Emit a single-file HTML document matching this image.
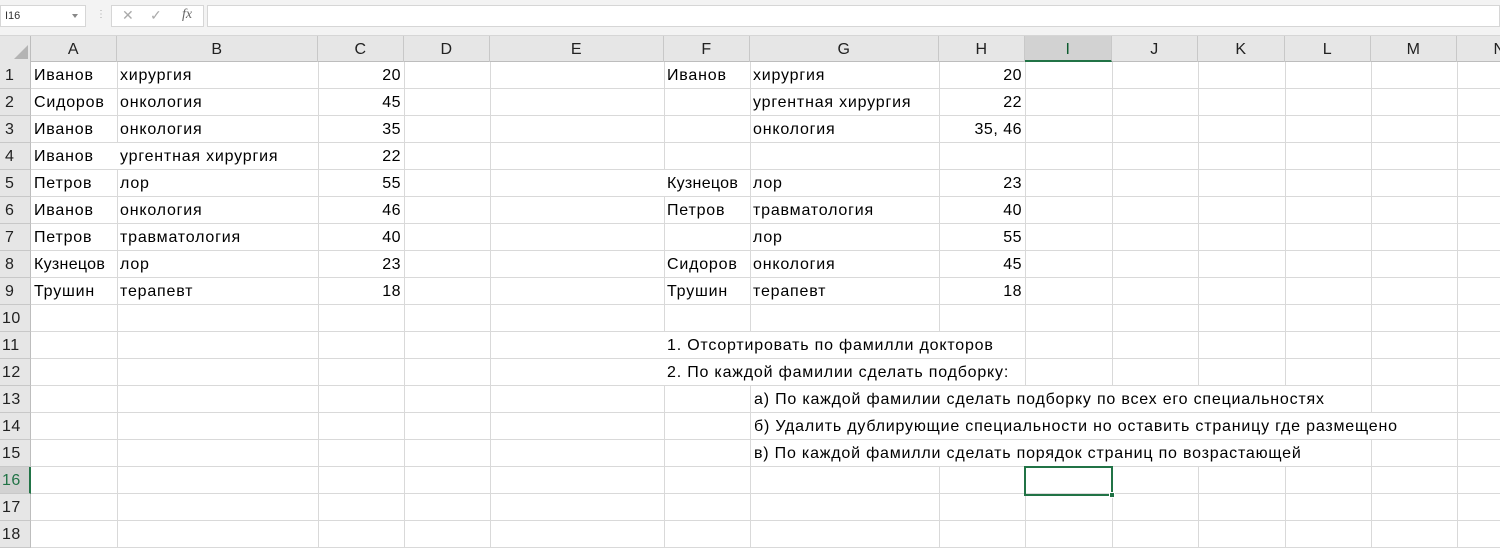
<!DOCTYPE html>
<html><head><meta charset="utf-8"><style>
*{margin:0;padding:0;box-sizing:border-box}
body{width:1500px;height:554px;overflow:hidden;background:#fff;position:relative;font-family:"Liberation Sans",Arial,sans-serif;color:#000}
.top{position:absolute;left:0;top:0;width:1500px;height:36px;background:#f3f3f3;border-bottom:1px solid #d6d6d6}
.nb{position:absolute;left:0;top:5px;width:86px;height:22px;background:#fff;border:1px solid #d6d6d6;font-size:11px;line-height:20px;padding-left:4px;color:#333}
.nb:after{content:"";position:absolute;right:7px;top:8px;border:3px solid transparent;border-top:4px solid #888}
.dots{position:absolute;left:96px;top:9px;color:#aaa;font-size:10px}
.fx{position:absolute;left:111px;top:5px;width:93px;height:22px;background:#fff;border:1px solid #d6d6d6;color:#aaa;font-size:14px}
.fb{position:absolute;left:207px;top:5px;width:1293px;height:22px;background:#fff;border:1px solid #d6d6d6}
.hdr{position:absolute;left:0;top:36px;width:1500px;height:26px;background:#e6e6e6;border-bottom:1px solid #bdbdbd}
.ch{position:absolute;top:36px;height:26px;line-height:27px;text-align:center;font-size:16px;color:#222;border-right:1px solid #c8c8c8;letter-spacing:0.5px}
.rh{position:absolute;left:0;width:31px;background:#e6e6e6;border-right:1px solid #bdbdbd;border-bottom:1px solid #c8c8c8;height:27px;line-height:28px;font-size:16px;color:#222;padding-left:5px;letter-spacing:0.5px}
.vl{position:absolute;top:62px;width:1px;height:486px;background:#d9d9d9}
.grid{position:absolute;left:31px;top:62px;width:1469px;height:486px;background:repeating-linear-gradient(to bottom,transparent 0 26px,#d9d9d9 26px 27px)}
.c{position:absolute;height:26px;line-height:28px;font-size:16px;white-space:nowrap;padding:0 3px;background:#fff;letter-spacing:0.8px}
.r{text-align:right;letter-spacing:0.5px}
.t{background:transparent}
</style></head><body>
<div class="top"></div>
<div class="nb">I16</div>
<div class="dots">⋮</div>
<div class="fx"><span style="position:absolute;left:10px;top:1px">✕</span><span style="position:absolute;left:38px;top:1px">✓</span><span style="position:absolute;left:70px;top:1px;font-style:italic;font-family:'Liberation Serif',serif;color:#666">fx</span></div>
<div class="fb"></div>
<div class="hdr"></div>
<div style="position:absolute;left:0;top:36px;width:31px;height:26px;background:#e6e6e6;border-right:1px solid #bdbdbd"></div>
<div style="position:absolute;left:14px;top:45px;width:0;height:0;border-left:14px solid transparent;border-bottom:14px solid #b4b4b4"></div>
<div class="ch" style="left:31px;width:86px">A</div>
<div class="ch" style="left:117px;width:201px">B</div>
<div class="ch" style="left:318px;width:86px">C</div>
<div class="ch" style="left:404px;width:86px">D</div>
<div class="ch" style="left:490px;width:174px">E</div>
<div class="ch" style="left:664px;width:86px">F</div>
<div class="ch" style="left:750px;width:189px">G</div>
<div class="ch" style="left:939px;width:86px">H</div>
<div class="ch" style="left:1025px;width:87px;background:#d2d2d2;border-bottom:2px solid #217346;color:#0e5c2f">I</div>
<div class="ch" style="left:1112px;width:86px">J</div>
<div class="ch" style="left:1198px;width:87px">K</div>
<div class="ch" style="left:1285px;width:86px">L</div>
<div class="ch" style="left:1371px;width:86px">M</div>
<div class="ch" style="left:1457px;width:86px">N</div>
<div class="grid"></div>
<div class="vl" style="left:117px"></div><div class="vl" style="left:318px"></div><div class="vl" style="left:404px"></div><div class="vl" style="left:490px"></div><div class="vl" style="left:664px"></div><div class="vl" style="left:750px"></div><div class="vl" style="left:939px"></div><div class="vl" style="left:1025px"></div><div class="vl" style="left:1112px"></div><div class="vl" style="left:1198px"></div><div class="vl" style="left:1285px"></div><div class="vl" style="left:1371px"></div><div class="vl" style="left:1457px"></div>
<div class="rh" style="top:62px">1</div><div class="rh" style="top:89px">2</div><div class="rh" style="top:116px">3</div><div class="rh" style="top:143px">4</div><div class="rh" style="top:170px">5</div><div class="rh" style="top:197px">6</div><div class="rh" style="top:224px">7</div><div class="rh" style="top:251px">8</div><div class="rh" style="top:278px">9</div><div class="rh" style="top:305px;padding-left:2px">10</div><div class="rh" style="top:332px;padding-left:2px">11</div><div class="rh" style="top:359px;padding-left:2px">12</div><div class="rh" style="top:386px;padding-left:2px">13</div><div class="rh" style="top:413px;padding-left:2px">14</div><div class="rh" style="top:440px;padding-left:2px">15</div><div class="rh" style="top:467px;padding-left:2px;background:#d2d2d2;color:#217346;border-right:2px solid #217346">16</div><div class="rh" style="top:494px;padding-left:2px">17</div><div class="rh" style="top:521px;padding-left:2px">18</div>
<div style="position:absolute;left:0;top:548px;width:1500px;height:6px;background:#fff"></div>
<div class="c t" style="left:31px;top:62px">Иванов</div><div class="c t" style="left:117px;top:62px">хирургия</div><div class="c t r" style="left:318px;width:86px;top:62px">20</div>
<div class="c t" style="left:31px;top:89px">Сидоров</div><div class="c t" style="left:117px;top:89px">онкология</div><div class="c t r" style="left:318px;width:86px;top:89px">45</div>
<div class="c t" style="left:31px;top:116px">Иванов</div><div class="c t" style="left:117px;top:116px">онкология</div><div class="c t r" style="left:318px;width:86px;top:116px">35</div>
<div class="c t" style="left:31px;top:143px">Иванов</div><div class="c" style="left:117px;top:143px">ургентная хирургия</div><div class="c t r" style="left:318px;width:86px;top:143px">22</div>
<div class="c t" style="left:31px;top:170px">Петров</div><div class="c t" style="left:117px;top:170px">лор</div><div class="c t r" style="left:318px;width:86px;top:170px">55</div>
<div class="c t" style="left:31px;top:197px">Иванов</div><div class="c t" style="left:117px;top:197px">онкология</div><div class="c t r" style="left:318px;width:86px;top:197px">46</div>
<div class="c t" style="left:31px;top:224px">Петров</div><div class="c t" style="left:117px;top:224px">травматология</div><div class="c t r" style="left:318px;width:86px;top:224px">40</div>
<div class="c" style="left:31px;top:251px;letter-spacing:0.3px">Кузнецов</div><div class="c t" style="left:117px;top:251px">лор</div><div class="c t r" style="left:318px;width:86px;top:251px">23</div>
<div class="c t" style="left:31px;top:278px">Трушин</div><div class="c t" style="left:117px;top:278px">терапевт</div><div class="c t r" style="left:318px;width:86px;top:278px">18</div>
<div class="c t" style="left:664px;top:62px">Иванов</div><div class="c t" style="left:750px;top:62px">хирургия</div><div class="c t r" style="left:939px;width:86px;top:62px">20</div>
<div class="c t" style="left:750px;top:89px">ургентная хирургия</div><div class="c t r" style="left:939px;width:86px;top:89px">22</div>
<div class="c t" style="left:750px;top:116px">онкология</div><div class="c t r" style="left:939px;width:86px;top:116px">35, 46</div>
<div class="c" style="left:664px;top:170px;letter-spacing:0.3px">Кузнецов</div><div class="c t" style="left:750px;top:170px">лор</div><div class="c t r" style="left:939px;width:86px;top:170px">23</div>
<div class="c t" style="left:664px;top:197px">Петров</div><div class="c t" style="left:750px;top:197px">травматология</div><div class="c t r" style="left:939px;width:86px;top:197px">40</div>
<div class="c t" style="left:750px;top:224px">лор</div><div class="c t r" style="left:939px;width:86px;top:224px">55</div>
<div class="c t" style="left:664px;top:251px">Сидоров</div><div class="c t" style="left:750px;top:251px">онкология</div><div class="c t r" style="left:939px;width:86px;top:251px">45</div>
<div class="c t" style="left:664px;top:278px">Трушин</div><div class="c t" style="left:750px;top:278px">терапевт</div><div class="c t r" style="left:939px;width:86px;top:278px">18</div>
<div class="c" style="left:664px;top:332px">1. Отсортировать по фамилли докторов</div>
<div class="c" style="left:664px;top:359px">2. По каждой фамилии сделать подборку:</div>
<div class="c" style="left:751px;top:386px">а) По каждой фамилии сделать подборку по всех его специальностях</div>
<div class="c" style="left:751px;top:413px">б) Удалить дублирующие специальности но оставить страницу где размещено</div>
<div class="c" style="left:751px;top:440px">в) По каждой фамилли сделать порядок страниц по возрастающей</div>
<div style="position:absolute;left:1024px;top:466px;width:89px;height:30px;border:2px solid #217346"></div>
<div style="position:absolute;left:1109px;top:492px;width:6px;height:6px;background:#217346;border:1px solid #fff"></div>
</body></html>
